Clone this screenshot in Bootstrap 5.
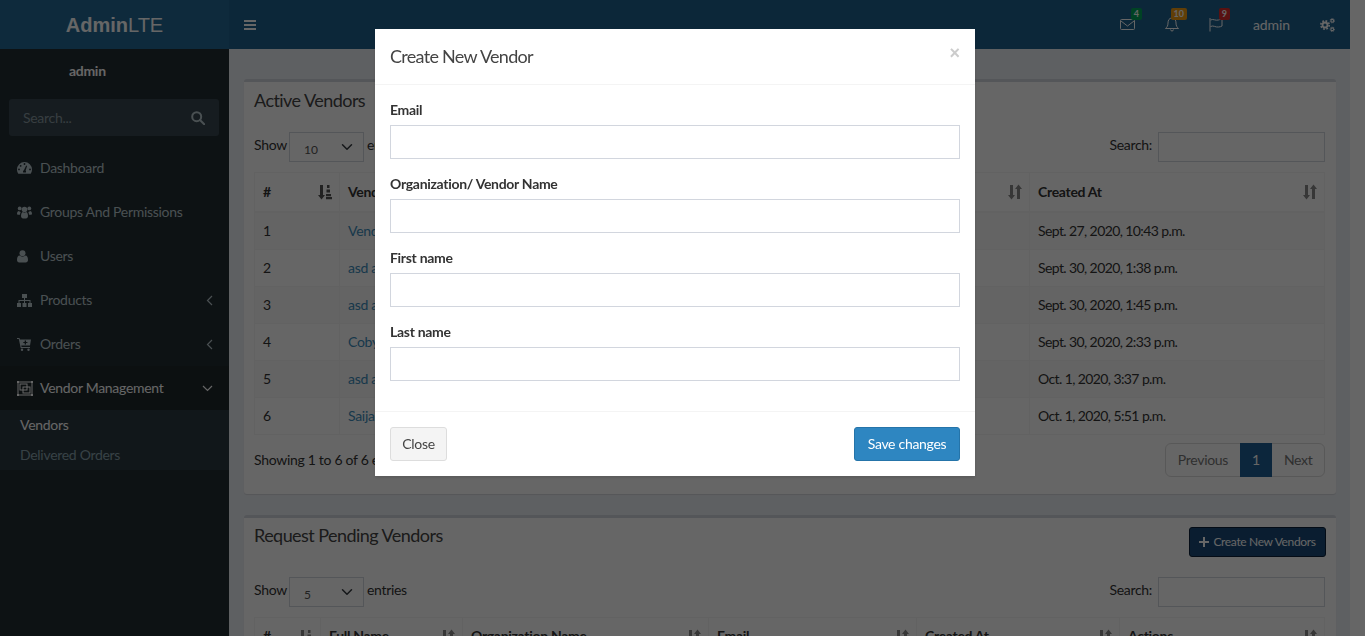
<!DOCTYPE html>
<html lang="en">
<head>
<meta charset="utf-8">
<title>Vendors</title>
<link rel="stylesheet" href="https://cdn.jsdelivr.net/npm/bootstrap@5.3.0/dist/css/bootstrap.min.css">
<style>
html,body{height:636px;overflow:hidden}
body{background:#fff;font-family:"Lato","Noto Sans",sans-serif;font-size:14px;line-height:20px;color:#333;letter-spacing:-.3px}
.shell{width:1350px;height:636px;overflow:hidden;background:#ecf0f5}
.top-logo{width:229px;height:49px;background:#246a97;color:#fff;font-family:"Liberation Sans",sans-serif;font-size:20px;letter-spacing:0}
.top-nav{height:49px;background:#20628f;color:#fff}
.burger{padding:0 15px 0 14px}
.nav-cell{padding:0 15px;height:49px}
.nav-name{letter-spacing:-.1px}
.nav-badge{position:absolute;font-size:9px;line-height:10px;font-weight:700;color:#fff;padding:1px 3px;border-radius:2px;top:8px;letter-spacing:0}
.bg-g{background:#00a65a;right:8px}.bg-o{background:#f39c12;right:7px}.bg-r{background:#dd2c2c;right:8px}
.side{width:229px;height:587px;background:#222d32;flex:none}
.side-user{height:50px;padding:12px 0 0 69px;font-weight:700;color:#fff}
.side-search{margin:0 10px 10px 9px;height:37px;background:#374850;border-radius:3px;padding:0 14px;color:#8a9aa2}
.side-search input{background:transparent;border:0;outline:0;color:#fff;width:150px;padding:0;font-size:14px;letter-spacing:-.3px}
.side-search input::placeholder{color:#8a9aa2;opacity:1}
.menu-item{height:44px;padding:0 16px 0 17px;color:#b8c7ce;text-decoration:none}
.menu-item:hover{color:#b8c7ce}
.menu-item.on{background:#1e282c;color:#fff}
.menu-ic{width:23px;flex:none}
.menu-sub{background:#2c3b41}
.menu-sub a{display:block;height:30px;line-height:30px;padding-left:20px;color:#8aa4af;text-decoration:none}
.menu-sub a.on{color:#fff}
.main-area{padding:30px 15px 0}
.panel-box{background:#fff;border-top:3px solid #d2d6de;border-radius:3px;box-shadow:0 1px 1px rgba(0,0,0,.1);margin-bottom:21px}
.panel-head{padding:9px 10px 11px}
.panel-head.tall{padding:9px 10px 8px}
.panel-title{font-size:18px;line-height:18px;color:#444;margin:0;font-weight:400;letter-spacing:-.55px}
.tall .panel-title{margin-top:-1px}
.panel-body{padding:0 11px 17px 10px}
.dt-top{height:52px;padding-top:12px}
.dt-label{padding-bottom:4px}
.dt-top .form-select{width:75px;height:30px;border-radius:0;border-color:#d2d6de;font-size:12px;padding:6px 10px 0 14px;color:#555;margin:0 3px 0 2px;background-position:right 8px center}
.dt-top .form-control{width:167px;height:30px;border-radius:0;border-color:#d2d6de;margin-left:6px}
.vendor-table{table-layout:fixed;width:1070px;margin-bottom:8px;--bs-table-border-color:#f4f4f4;--bs-table-striped-bg:#f9f9f9;--bs-table-color:#333;--bs-table-striped-color:#333;color:#333}
.vendor-table>:not(caption)>*>*{padding:8px;color:#333;vertical-align:middle}
.vendor-table thead th{position:relative;border-bottom-width:2px;font-weight:700;height:39px}
.vendor-table td{height:37px}
.vendor-table td.when{letter-spacing:-.6px}
.vendor-table a{color:#3c8dbc;text-decoration:none}
.sort-ic{position:absolute;right:7px;top:11px;color:#8a8a8a}
.sort-on{color:#555}
.pagination{--bs-pagination-color:#777;--bs-pagination-border-color:#ddd;--bs-pagination-padding-x:11.5px;--bs-pagination-padding-y:6px;--bs-pagination-font-size:14px;--bs-pagination-active-bg:#1f5f96;--bs-pagination-active-border-color:#1f5f96;--bs-pagination-disabled-color:#777;--bs-pagination-disabled-bg:#fff;--bs-pagination-disabled-border-color:#ddd;margin:0}
.create-btn{height:30px;width:137px;padding:0;font-size:12px;line-height:1;background:#1a4a78;border:1px solid #0a2038;border-radius:3px;color:#fff;letter-spacing:-.35px}
.modal-backdrop.show{opacity:.6}
.vendor-dialog{width:600px;max-width:600px;margin:29px auto 0;left:-7.5px;position:relative}
.vendor-dialog .modal-content{border:0;border-radius:0;box-shadow:0 2px 3px rgba(0,0,0,.125)}
.vendor-dialog .modal-header{padding:15px;height:56px;border-bottom:1px solid #f4f4f4;border-radius:0}
.vendor-dialog .modal-title{font-size:18px;line-height:25px;color:#444;font-weight:400;letter-spacing:-.7px}
.x-btn{background:none;border:0;padding:0;font:700 18px/18px "Liberation Sans",sans-serif;color:#ccc;position:absolute;right:15px;top:15px;letter-spacing:0}
.vendor-dialog .modal-body{padding:15px 15px 0}
.field-box{margin-bottom:15px}
.field-box label{display:block;font-weight:700;margin-bottom:5px;color:#333}
.field-box .form-control{height:34px;border-radius:0;border-color:#d2d6de}
.vendor-dialog .modal-footer{padding:15px;border-top:1px solid #f4f4f4;border-radius:0;justify-content:space-between;margin-top:15px}
.vendor-dialog .modal-footer>*{margin:0}
.btn-shut{height:34px;width:57px;padding:0;background:#f4f4f4;border:1px solid #ddd;color:#444;border-radius:3px;font-size:14px;letter-spacing:-.3px}
.btn-save{height:34px;width:106px;padding:0;background:#2e86c1;border:1px solid #2574a9;color:#fff;border-radius:3px;font-size:14px;letter-spacing:-.3px}
</style>
</head>
<body>
<svg width="0" height="0" class="d-block position-absolute">
<defs>
<symbol id="i-sort" viewBox="0 0 14 16"><path d="M2 1h3v10h2l-3.500 4.500L0 11h2zM10.500 .5L14 5h-2v10H9V5H7z" fill="currentColor"/></symbol>
<symbol id="i-asc" viewBox="0 0 14 16"><path d="M2 1h3v10h2l-3.500 4.500L0 11h2z" fill="currentColor"/><path d="M9 1h2.500v3H9zM8.500 5.500h3.500v3H8.500zM8 10h5v2.200H8zM8 13h6v2.200H8z" fill="currentColor"/></symbol>
<symbol id="i-gear" viewBox="0 0 12 12"><circle cx="6" cy="6" r="3" fill="none" stroke="currentColor" stroke-width="2.200"/><circle cx="6" cy="6" r="5" fill="none" stroke="currentColor" stroke-width="2" stroke-dasharray="2.100 1.830"/></symbol>
</defs>
</svg>
<div class="shell">
  <header class="d-flex">
    <a class="top-logo d-flex align-items-center justify-content-center text-decoration-none"><b>Admin</b>LTE</a>
    <nav class="top-nav flex-grow-1 d-flex align-items-center justify-content-between">
      <div class="burger d-flex align-items-center">
        <svg width="14" height="14" viewBox="0 0 14 14"><path d="M1 2h12v2H1zM1 6h12v2H1zM1 10h12v2H1z" fill="#fff"/></svg>
      </div>
      <div class="d-flex align-items-center">
        <div class="nav-cell position-relative d-flex align-items-center">
          <svg width="15" height="15" viewBox="0 0 15 15" fill="none" stroke="#fff" stroke-width="1"><rect x=".5" y="2.500" width="14" height="10" rx="1"/><path d="M1 4l6.500 5L14 4"/></svg>
          <span class="nav-badge bg-g">4</span>
        </div>
        <div class="nav-cell position-relative d-flex align-items-center">
          <svg width="14" height="15" viewBox="0 0 14 15" fill="none" stroke="#fff" stroke-width="1"><path d="M7 1c-3 0-4 2.500-4 5 0 3-1 4-2.500 5.500h13C12 10 11 9 11 6c0-2.500-1-5-4-5z"/><path d="M5.500 12.500c0 2 3 2 3 0" /></svg>
          <span class="nav-badge bg-o">10</span>
        </div>
        <div class="nav-cell position-relative d-flex align-items-center">
          <svg width="14" height="15" viewBox="0 0 14 15" fill="none" stroke="#fff" stroke-width="1"><path d="M1 1v13.500"/><path d="M1.500 3c3-1.500 5 1 8 0 1.500-.5 3-1 3.500-1v7c-1 .5-2 1-3.500 1-3 .5-5-2-8-.5"/></svg>
          <span class="nav-badge bg-r">9</span>
        </div>
        <div class="nav-cell nav-name d-flex align-items-center">admin</div>
        <div class="nav-cell d-flex align-items-center text-white">
          <svg width="15" height="14" viewBox="0 0 15 14"><use href="#i-gear" x="0" y="2" width="10" height="10"/><use href="#i-gear" x="9.500" y="0" width="5.500" height="5.500"/><use href="#i-gear" x="9.500" y="8.500" width="5.500" height="5.500"/></svg>
        </div>
      </div>
    </nav>
  </header>
  <div class="d-flex">
    <aside class="side">
      <div class="side-user">admin</div>
      <div class="side-search d-flex align-items-center justify-content-between">
        <input type="text" placeholder="Search...">
        <svg width="14" height="14" viewBox="0 0 14 14" fill="none" stroke="#b8c7ce" stroke-width="2"><circle cx="5.700" cy="5.700" r="4.500"/><path d="M9 9l4.200 4.200" stroke-linecap="round"/></svg>
      </div>
      <a class="menu-item d-flex align-items-center"><span class="menu-ic d-flex"><svg width="15" height="12" viewBox="0 0 15 12"><path d="M7.500 0A7.500 7.500 0 0 0 0 7.500c0 1.700.5 3 1.300 4.300h12.400c.8-1.300 1.300-2.600 1.300-4.300A7.500 7.500 0 0 0 7.500 0zM6.600 2a.9.900 0 1 1 1.800 0 .9.900 0 0 1-1.800 0zM3 4.500a.9.900 0 1 1 1.300-1.300A.9.900 0 0 1 3 4.500zM2 8.300a.9.900 0 1 1 0-1.800.9.900 0 0 1 0 1.800zm6.800 2.200H6.200c-.5-1 0-2 .7-2.300l2.300-4.600.9.400-1.500 4.500c.5.500.7 1.300.2 2zM13 8.300a.9.900 0 1 1 0-1.800.9.900 0 0 1 0 1.800z" fill="#b8c7ce" fill-rule="evenodd"/></svg></span>Dashboard</a>
      <a class="menu-item d-flex align-items-center"><span class="menu-ic d-flex"><svg width="15" height="13" viewBox="0 0 15 13" fill="#b8c7ce"><circle cx="2.700" cy="2.400" r="1.900"/><circle cx="12.300" cy="2.400" r="1.900"/><circle cx="7.500" cy="3.500" r="2.800"/><path d="M0 8c0-2 .8-3 2-3 .6.700 1 1 1.700 1-.3 1-.7 1.700-.7 2.800H1C.4 8.800 0 8.500 0 8zM15 8c0-2-.8-3-2-3-.6.700-1 1-1.700 1 .3 1 .7 1.700.7 2.800h2c.6 0 1-.3 1-.8zM4 10c0-2.500 1-4 2-4 1 1 2 1 3 0 1 0 2 1.500 2 4 0 1.500-1 2.500-2 2.500H6C5 12.500 4 11.500 4 10z"/></svg></span>Groups And Permissions</a>
      <a class="menu-item d-flex align-items-center"><span class="menu-ic d-flex"><svg width="11" height="13" viewBox="0 0 11 13" fill="#b8c7ce"><circle cx="5.500" cy="3.200" r="3"/><path d="M0 10c0-3 1-4.500 2.500-4.500 1.800 1.500 4.200 1.500 6 0C10 5.500 11 7 11 10c0 1.500-1 2.500-2.200 2.500H2.200C1 12.500 0 11.500 0 10z"/></svg></span>Users</a>
      <a class="menu-item d-flex align-items-center"><span class="menu-ic d-flex"><svg width="15" height="13" viewBox="0 0 15 13" fill="#b8c7ce"><rect x="5" y="0" width="5" height="4"/><rect x="0" y="9" width="4" height="4"/><rect x="5.500" y="9" width="4" height="4"/><rect x="11" y="9" width="4" height="4"/><path d="M7 4h1v2h5.500v3h-1V7H8v2H7V7H2.500v2h-1V6H7z"/></svg></span><span class="flex-grow-1">Products</span><svg width="7" height="11" viewBox="0 0 7 11" fill="none" stroke="#b8c7ce" stroke-width="1.200"><path d="M6 1L1.500 5.500 6 10"/></svg></a>
      <a class="menu-item d-flex align-items-center"><span class="menu-ic d-flex"><svg width="14" height="13" viewBox="0 0 14 13"><path d="M0 0h2.500l.4 1.500H14l-1 6H4.300l.3 1.500H13v1H3.700L1.800 1H0z" fill="#b8c7ce"/><path d="M7.700 2.500h1.300v1.400h1.400v1.200H9v1.400H7.700V5.100H6.300V3.900h1.400z" fill="#222d32"/><circle cx="5" cy="11.700" r="1.200" fill="#b8c7ce"/><circle cx="11.500" cy="11.700" r="1.200" fill="#b8c7ce"/></svg></span><span class="flex-grow-1">Orders</span><svg width="7" height="11" viewBox="0 0 7 11" fill="none" stroke="#b8c7ce" stroke-width="1.200"><path d="M6 1L1.500 5.500 6 10"/></svg></a>
      <a class="menu-item on d-flex align-items-center"><span class="menu-ic d-flex"><svg width="16" height="15" viewBox="0 0 16 15" fill="none" stroke="#fff" stroke-width="1"><rect x="1" y="1" width="14" height="13"/><rect x="3" y="3" width="7" height="6"/><rect x="6" y="6" width="7" height="6"/><g fill="#fff" stroke="none"><rect width="2" height="2"/><rect x="14" width="2" height="2"/><rect y="13" width="2" height="2"/><rect x="14" y="13" width="2" height="2"/></g></svg></span><span class="flex-grow-1">Vendor Management</span><svg width="11" height="7" viewBox="0 0 11 7" fill="none" stroke="#fff" stroke-width="1.200"><path d="M1 1l4.500 4.500L10 1"/></svg></a>
      <div class="menu-sub"><a class="on" href="#">Vendors</a><a href="#">Delivered Orders</a></div>
    </aside>
    <main class="main-area flex-grow-1">
      <section class="panel-box">
        <div class="panel-head"><h3 class="panel-title">Active Vendors</h3></div>
        <div class="panel-body">
          <div class="dt-top d-flex justify-content-between align-items-start">
            <div class="d-flex align-items-center"><span class="dt-label">Show</span><select class="form-select"><option>10</option></select><span class="dt-label">entries</span></div>
            <div class="d-flex align-items-center"><span class="dt-label">Search:</span><input class="form-control" type="text"></div>
          </div>
          <table class="table table-bordered table-striped vendor-table">
            <colgroup><col style="width:85px"><col style="width:690px"><col style="width:295px"></colgroup>
            <thead><tr>
              <th>#<svg class="sort-ic sort-on" width="14" height="16"><use href="#i-asc"/></svg></th>
              <th>Vendor<svg class="sort-ic" width="14" height="16"><use href="#i-sort"/></svg></th>
              <th>Created At<svg class="sort-ic" width="14" height="16"><use href="#i-sort"/></svg></th>
            </tr></thead>
            <tbody>
              <tr><td>1</td><td><a href="#">Vendor</a></td><td class="when">Sept. 27, 2020, 10:43 p.m.</td></tr>
              <tr><td>2</td><td><a href="#">asd asd</a></td><td class="when">Sept. 30, 2020, 1:38 p.m.</td></tr>
              <tr><td>3</td><td><a href="#">asd asd</a></td><td class="when">Sept. 30, 2020, 1:45 p.m.</td></tr>
              <tr><td>4</td><td><a href="#">Coby</a></td><td class="when">Sept. 30, 2020, 2:33 p.m.</td></tr>
              <tr><td>5</td><td><a href="#">asd asd</a></td><td class="when">Oct. 1, 2020, 3:37 p.m.</td></tr>
              <tr><td>6</td><td><a href="#">Saija</a></td><td class="when">Oct. 1, 2020, 5:51 p.m.</td></tr>
            </tbody>
          </table>
          <div class="d-flex justify-content-between align-items-center">
            <div>Showing 1 to 6 of 6 entries</div>
            <ul class="pagination">
              <li class="page-item disabled"><a class="page-link">Previous</a></li>
              <li class="page-item active"><a class="page-link">1</a></li>
              <li class="page-item disabled"><a class="page-link">Next</a></li>
            </ul>
          </div>
        </div>
      </section>
      <section class="panel-box">
        <div class="panel-head tall d-flex justify-content-between align-items-start">
          <h3 class="panel-title">Request Pending Vendors</h3>
          <button class="create-btn btn d-flex align-items-center justify-content-center gap-1" type="button"><svg width="10" height="10" viewBox="0 0 10 10"><path d="M4 0h2v4h4v2H6v4H4V6H0V4h4z" fill="#fff"/></svg>Create New Vendors</button>
        </div>
        <div class="panel-body">
          <div class="dt-top d-flex justify-content-between align-items-start">
            <div class="d-flex align-items-center"><span class="dt-label">Show</span><select class="form-select"><option>5</option></select><span class="dt-label">entries</span></div>
            <div class="d-flex align-items-center"><span class="dt-label">Search:</span><input class="form-control" type="text"></div>
          </div>
          <table class="table table-bordered vendor-table">
            <colgroup><col style="width:66px"><col style="width:142px"><col style="width:246px"><col style="width:208px"><col style="width:203px"><col style="width:205px"></colgroup>
            <thead><tr>
              <th>#<svg class="sort-ic" width="14" height="16"><use href="#i-asc"/></svg></th>
              <th>Full Name<svg class="sort-ic" width="14" height="16"><use href="#i-sort"/></svg></th>
              <th>Organization Name<svg class="sort-ic" width="14" height="16"><use href="#i-sort"/></svg></th>
              <th>Email<svg class="sort-ic" width="14" height="16"><use href="#i-sort"/></svg></th>
              <th>Created At<svg class="sort-ic" width="14" height="16"><use href="#i-sort"/></svg></th>
              <th>Actions<svg class="sort-ic" width="14" height="16"><use href="#i-sort"/></svg></th>
            </tr></thead>
          </table>
        </div>
      </section>
    </main>
  </div>
</div>
<div class="modal-backdrop show"></div>
<div class="modal d-block" tabindex="-1">
  <div class="modal-dialog vendor-dialog">
    <div class="modal-content">
      <div class="modal-header">
        <h4 class="modal-title">Create New Vendor</h4>
        <button class="x-btn" type="button">×</button>
      </div>
      <div class="modal-body">
        <div class="field-box"><label>Email</label><input class="form-control" type="text"></div>
        <div class="field-box"><label>Organization/ Vendor Name</label><input class="form-control" type="text"></div>
        <div class="field-box"><label>First name</label><input class="form-control" type="text"></div>
        <div class="field-box"><label>Last name</label><input class="form-control" type="text"></div>
      </div>
      <div class="modal-footer">
        <button class="btn-shut" type="button">Close</button>
        <button class="btn-save" type="button">Save changes</button>
      </div>
    </div>
  </div>
</div>
<script src="https://cdn.jsdelivr.net/npm/bootstrap@5.3.0/dist/js/bootstrap.bundle.min.js"></script>
</body>
</html>
